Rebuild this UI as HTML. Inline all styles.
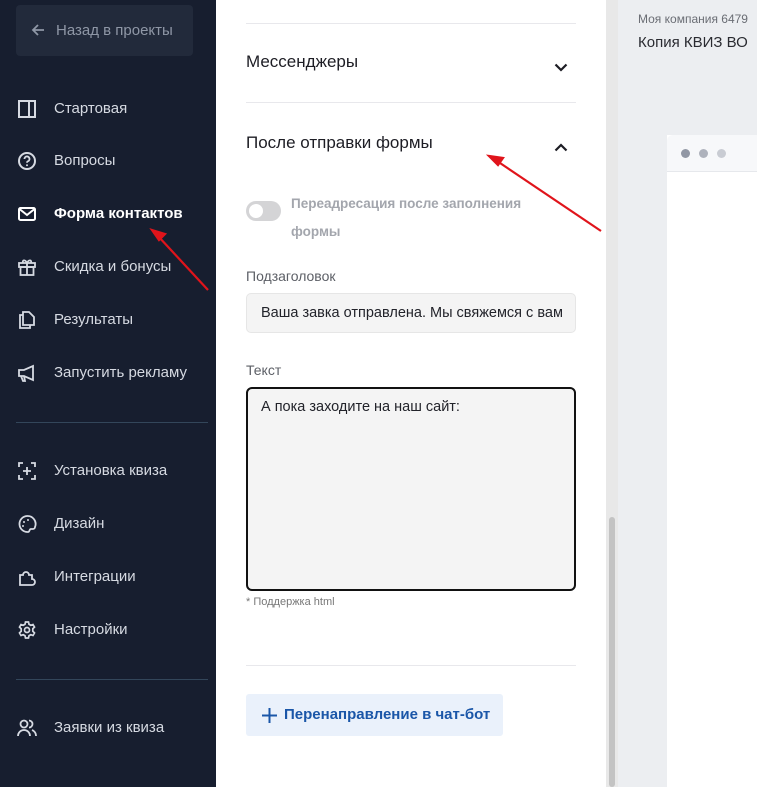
<!DOCTYPE html>
<html><head><meta charset="utf-8"><style>
*{margin:0;padding:0;box-sizing:border-box}
body{width:757px;height:787px;overflow:hidden;position:relative;font-family:"Liberation Sans","DejaVu Sans",sans-serif;background:#fff}
.side{position:absolute;left:0;top:0;width:216px;height:787px;background:#171e2f}
.back{position:absolute;left:16px;top:5px;width:177px;height:51px;background:#222a3b;border-radius:4px;color:#8f97a6;font-size:15px;line-height:51px;padding-left:40px}
.back svg{position:absolute;left:15px;top:18px}
.item{position:absolute;left:0;width:216px;color:#d6dae2;font-size:15px;height:20px;line-height:20px}
.item span{position:absolute;left:54px}
.item svg{position:absolute;left:17px;top:0}
.hr{position:absolute;left:16px;width:192px;height:1px;background:#33465a}
.main{position:absolute;left:216px;top:0;width:390px;height:787px;background:#fff}
.sep{position:absolute;left:30px;width:330px;height:1px;background:#e8e8ec}
.h{position:absolute;left:30px;font-size:17px;color:#1d1d24}
.lbl{position:absolute;font-size:14px;color:#5c5f66}
.scroll{position:absolute;left:606px;top:0;width:12px;height:787px;background:#e8e8e8}
.thumb{position:absolute;left:609px;top:517px;width:6px;height:270px;background:#c3c3c3;border-radius:3px}
.right{position:absolute;left:618px;top:0;width:139px;height:787px;background:#eceef1}
.card{position:absolute;left:667px;top:135px;width:90px;height:652px;background:#fff}
.cardh{position:absolute;left:667px;top:135px;width:90px;height:37px;background:#f7f8fa;border-bottom:1px solid #e6e8ec;border-radius:6px 0 0 0}
.dot{position:absolute;top:149px;width:9px;height:9px;border-radius:50%}
</style></head><body>
<div class="side">
 <div class="back"><svg width="14" height="14" viewBox="0 0 14 14"><path d="M13 7H2M7 2L2 7l5 5" stroke="#8f97a6" stroke-width="1.8" fill="none"/></svg>Назад в проекты</div>
 <div class="item" style="top:99px"><svg width="20" height="20" viewBox="0 0 20 20"><rect x="2" y="2" width="16" height="16" fill="none" stroke="#d6dae2" stroke-width="2"/><path d="M12 2v16" stroke="#d6dae2" stroke-width="2"/></svg><span>Стартовая</span></div>
 <div class="item" style="top:151px"><svg width="20" height="20" viewBox="0 0 20 20"><circle cx="10" cy="10" r="8" fill="none" stroke="#d6dae2" stroke-width="2"/><path d="M7.5 8a2.5 2.5 0 1 1 3.3 2.3c-.6.3-.8.7-.8 1.4" stroke="#d6dae2" stroke-width="1.8" fill="none"/><circle cx="10" cy="14.3" r="1" fill="#d6dae2"/></svg><span>Вопросы</span></div>
 <div class="item" style="top:204px;color:#fff;font-weight:bold"><svg width="20" height="20" viewBox="0 0 20 20"><rect x="2" y="4" width="16" height="12" rx="1.5" fill="none" stroke="#fff" stroke-width="2"/><path d="M2.5 5l7.5 6 7.5-6" stroke="#fff" stroke-width="2" fill="none"/></svg><span>Форма контактов</span></div>
 <div class="item" style="top:257px"><svg width="20" height="20" viewBox="0 0 20 20"><rect x="2" y="6" width="16" height="4" fill="none" stroke="#d6dae2" stroke-width="1.8"/><rect x="3.5" y="10" width="13" height="8" fill="none" stroke="#d6dae2" stroke-width="1.8"/><path d="M10 6v12M10 6C8 2 5 3 6 6M10 6c2-4 5-3 4 0" stroke="#d6dae2" stroke-width="1.8" fill="none"/></svg><span>Скидка и бонусы</span></div>
 <div class="item" style="top:310px"><svg width="20" height="20" viewBox="0 0 20 20"><path d="M6 5H3v13h10v-3" stroke="#d6dae2" stroke-width="1.8" fill="none"/><path d="M6 2h6l5 5v8H6z" stroke="#d6dae2" stroke-width="1.8" fill="none"/></svg><span>Результаты</span></div>
 <div class="item" style="top:363px"><svg width="20" height="20" viewBox="0 0 20 20"><path d="M2 7h5l9-4v14l-9-4H2zM4 13l2 5h2l-1-5" stroke="#d6dae2" stroke-width="1.8" fill="none"/></svg><span>Запустить рекламу</span></div>
 <div class="hr" style="top:422px"></div>
 <div class="item" style="top:461px"><svg width="20" height="20" viewBox="0 0 20 20"><path d="M2 6V2h4M14 2h4v4M18 14v4h-4M6 18H2v-4M10 6v8M6 10h8" stroke="#d6dae2" stroke-width="1.8" fill="none"/></svg><span>Установка квиза</span></div>
 <div class="item" style="top:514px"><svg width="20" height="20" viewBox="0 0 20 20"><path d="M10 2a8 8 0 1 0 1 16c2 0 1-3 3-3h2a2 2 0 0 0 2-2A8 8 0 0 0 10 2z" stroke="#d6dae2" stroke-width="1.8" fill="none"/><circle cx="7" cy="8" r="1" fill="#d6dae2"/><circle cx="11" cy="6" r="1" fill="#d6dae2"/><circle cx="6" cy="12" r="1" fill="#d6dae2"/></svg><span>Дизайн</span></div>
 <div class="item" style="top:567px"><svg width="20" height="20" viewBox="0 0 20 20"><path d="M3 18V8h3a3 3 0 1 1 6 0h3v4a2.5 2.5 0 1 1 0 6z" stroke="#d6dae2" stroke-width="1.8" fill="none"/></svg><span>Интеграции</span></div>
 <div class="item" style="top:620px"><svg width="20" height="20" viewBox="0 0 20 20"><path d="M8.5 2h3l.5 2.3 1.8 1 2.2-.8 1.5 2.6-1.7 1.6v2.6l1.7 1.6-1.5 2.6-2.2-.8-1.8 1-.5 2.3h-3L8 15.7l-1.8-1-2.2.8-1.5-2.6 1.7-1.6V8.7L2.5 7.1 4 4.5l2.2.8L8 4.3z" stroke="#d6dae2" stroke-width="1.7" fill="none"/><circle cx="10" cy="10" r="2.5" stroke="#d6dae2" stroke-width="1.7" fill="none"/></svg><span>Настройки</span></div>
 <div class="hr" style="top:679px"></div>
 <div class="item" style="top:718px"><svg width="20" height="20" viewBox="0 0 20 20"><circle cx="7" cy="6" r="3.5" stroke="#d6dae2" stroke-width="1.8" fill="none"/><path d="M1 18a6 6 0 0 1 12 0M12 2.5a3.5 3.5 0 0 1 0 7M15 12a6 6 0 0 1 4 6" stroke="#d6dae2" stroke-width="1.8" fill="none"/></svg><span>Заявки из квиза</span></div>
</div>
<div class="main">
 <div class="sep" style="top:23px"></div>
 <div class="h" style="top:52px">Мессенджеры</div>
 <svg style="position:absolute;left:338px;top:63px" width="14" height="9" viewBox="0 0 14 9"><path d="M1.5 1.5l5.5 5.5 5.5-5.5" stroke="#1d1d24" stroke-width="2.2" fill="none"/></svg>
 <div class="sep" style="top:102px"></div>
 <div class="h" style="top:133px">После отправки формы</div>
 <svg style="position:absolute;left:338px;top:143px" width="14" height="9" viewBox="0 0 14 9"><path d="M1.5 7.5l5.5-5.5 5.5 5.5" stroke="#1d1d24" stroke-width="2.2" fill="none"/></svg>
 <div style="position:absolute;left:30px;top:201px;width:35px;height:20px;border-radius:10px;background:#d4d4d6"></div>
 <div style="position:absolute;left:33px;top:204px;width:14px;height:14px;border-radius:50%;background:#fff"></div>
 <div class="lbl" style="left:75px;top:190px;color:#a3a6ad;font-size:13.5px;line-height:28px;font-weight:bold;width:250px">Переадресация после заполнения формы</div>
 <div class="lbl" style="left:30px;top:268px">Подзаголовок</div>
 <div style="position:absolute;left:30px;top:293px;width:330px;height:40px;background:#f4f4f4;border:1px solid #e6e6e6;border-radius:5px;font-size:14.5px;color:#22232a;line-height:38px;padding-left:14px;white-space:nowrap;overflow:hidden">Ваша завка отправлена. Мы свяжемся с вам</div>
 <div class="lbl" style="left:30px;top:362px">Текст</div>
 <div style="position:absolute;left:30px;top:387px;width:330px;height:204px;background:#f4f4f4;border:2px solid #111;border-radius:6px;font-size:14.5px;color:#22232a;padding:10px 13px">А пока заходите на наш сайт:</div>
 <div style="position:absolute;left:30px;top:596px;font-size:11px;color:#777">* Поддержка html</div>
 <div class="sep" style="top:665px"></div>
 <div style="position:absolute;left:30px;top:694px;width:257px;height:42px;background:#eaf1fb;border-radius:3px;color:#1a56a8;font-weight:bold;font-size:15px;line-height:42px;padding-left:38px">Перенаправление в чат-бот</div>
 <svg style="position:absolute;left:46px;top:708px" width="15" height="15" viewBox="0 0 15 15"><path d="M7.5 0v15M0 7.5h15" stroke="#1a56a8" stroke-width="2"/></svg>
</div>
<div class="scroll"></div><div class="thumb"></div>
<div class="right"></div>
<div style="position:absolute;left:638px;top:12px;font-size:12px;color:#6a6d74;white-space:nowrap">Моя компания 6479</div>
<div style="position:absolute;left:638px;top:34px;font-size:15px;color:#2a2b31;white-space:nowrap">Копия КВИЗ ВО</div>
<div class="card"></div><div class="cardh"></div>
<div class="dot" style="left:681px;background:#9197a4"></div>
<div class="dot" style="left:699px;background:#aeb2bc"></div>
<div class="dot" style="left:717px;background:#c9ccd3"></div>
<svg style="position:absolute;left:0;top:0" width="757" height="787"><g stroke="#e0141b" stroke-width="2.2" fill="#e0141b"><path d="M208 290L158 236" fill="none"/><path d="M152 230l13 4-6 6z"/><path d="M601 231L497 161" fill="none"/><path d="M489 156l14 2-5 7z"/></g></svg>
</body></html>
